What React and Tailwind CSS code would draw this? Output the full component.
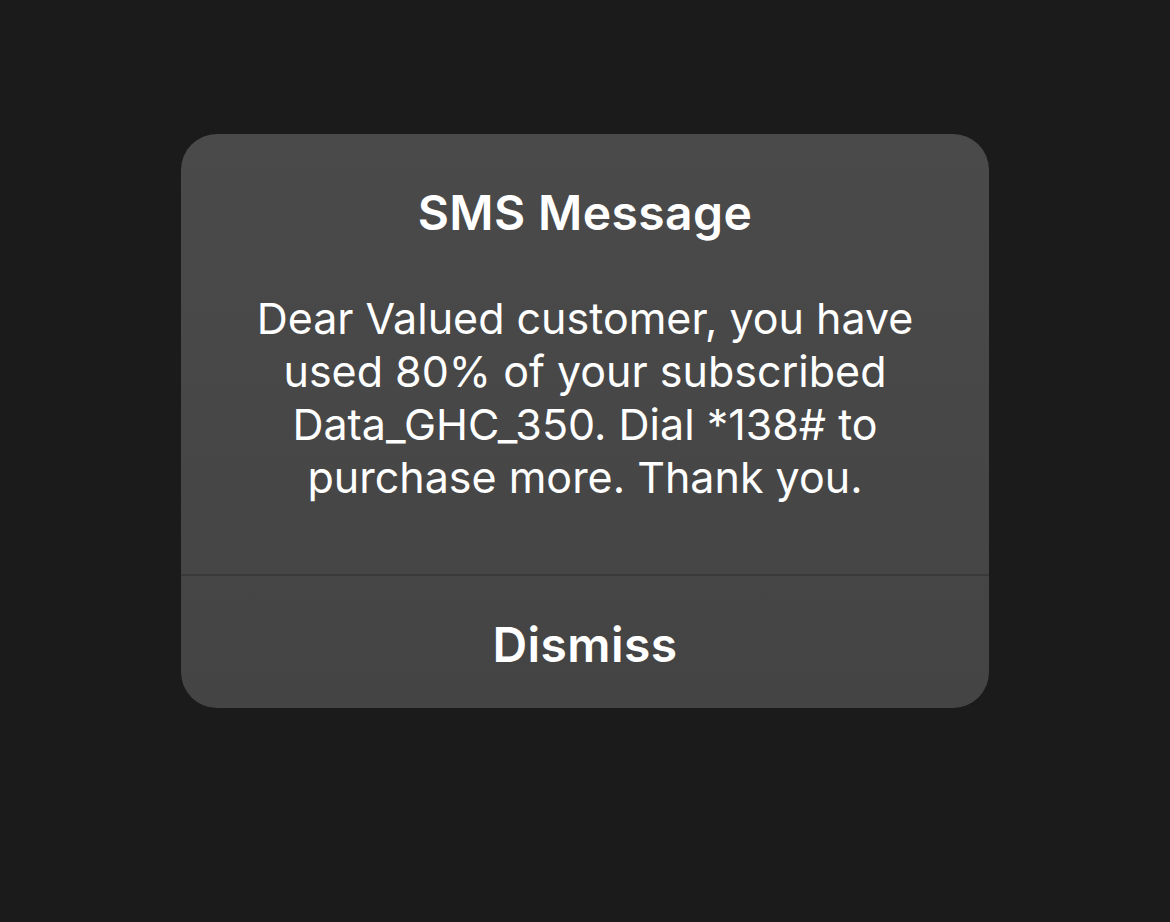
export default function App() {
  return (
    <div
      className="w-[1170px] h-[922px] bg-[#1b1b1c] flex justify-center overflow-hidden"
      style={{ fontFamily: 'Inter, "Noto Sans", sans-serif' }}
    >
      <div className="mt-[134px] w-[808px] h-[574px] rounded-[36px] bg-gradient-to-b from-[#4a4a4a] to-[#444444] flex flex-col overflow-hidden">
        <div className="flex-1 flex flex-col items-center pt-[51px]">
          <div className="text-white text-[48px] leading-[56px] font-semibold tracking-[0.4px]">
            SMS Message
          </div>
          <div className="mt-[51px] text-white text-[43px] leading-[53px] text-center">
            Dear Valued customer, you have
            <br />
            used 80% of your subscribed
            <br />
            Data_GHC_350. Dial *138# to
            <br />
            purchase more. Thank you.
          </div>
        </div>
        <div className="h-[2px] bg-[#393939]" />
        <div className="h-[132px] flex items-center justify-center pt-[5px]">
          <span className="text-white text-[48px] leading-[56px] font-semibold tracking-[0.4px]">
            Dismiss
          </span>
        </div>
      </div>
    </div>
  );
}
